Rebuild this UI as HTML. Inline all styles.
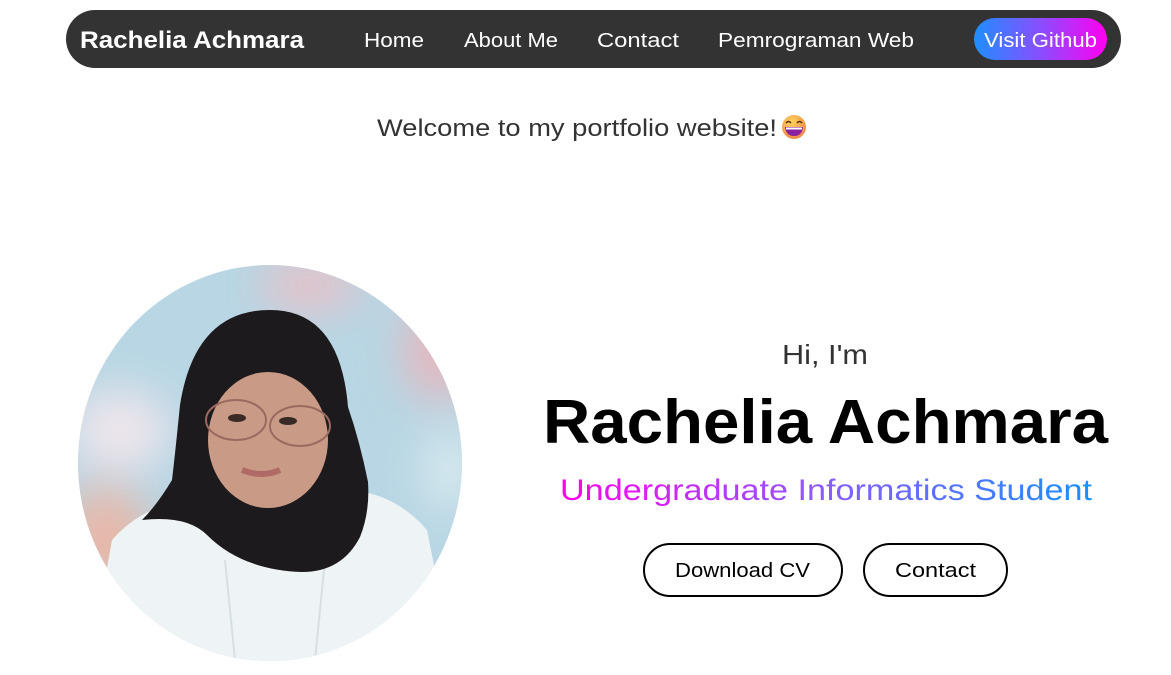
<!DOCTYPE html>
<html><head><meta charset="utf-8"><style>
html,body{margin:0;padding:0;background:#fff;width:1171px;height:675px;overflow:hidden}
svg{display:block}
text{font-family:"Liberation Sans",sans-serif}
</style></head><body>
<svg width="1171" height="675" viewBox="0 0 1171 675" xmlns="http://www.w3.org/2000/svg">
<defs>
<linearGradient id="btn" x1="0" x2="1" y1="0" y2="0"><stop offset="0" stop-color="#1e8fff"/><stop offset="0.5" stop-color="#8a4dff"/><stop offset="1" stop-color="#ff00f0"/></linearGradient>
<linearGradient id="sub" x1="560" x2="1092" y1="0" y2="0" gradientUnits="userSpaceOnUse"><stop offset="0" stop-color="#ff00ee"/><stop offset="0.5" stop-color="#8a5cff"/><stop offset="1" stop-color="#1a8fff"/></linearGradient>
<clipPath id="cp"><ellipse cx="270" cy="463" rx="192" ry="198"/></clipPath>
<filter id="bl" x="-50%" y="-50%" width="200%" height="200%"><feGaussianBlur stdDeviation="22"/></filter>
<radialGradient id="emo" cx="0.4" cy="0.3" r="0.7"><stop offset="0" stop-color="#ffd45a"/><stop offset="1" stop-color="#f08a4a"/></radialGradient>
</defs>

<rect x="66" y="10" width="1055" height="58" rx="29" fill="#333"/>
<text x="80" y="48" fill="#fff" font-size="24" font-weight="bold" textLength="224" lengthAdjust="spacingAndGlyphs">Rachelia Achmara</text>
<text x="364" y="47" fill="#fff" font-size="20" textLength="60" lengthAdjust="spacingAndGlyphs">Home</text>
<text x="464" y="47" fill="#fff" font-size="20" textLength="94" lengthAdjust="spacingAndGlyphs">About Me</text>
<text x="597" y="47" fill="#fff" font-size="20" textLength="82" lengthAdjust="spacingAndGlyphs">Contact</text>
<text x="718" y="47" fill="#fff" font-size="20" textLength="196" lengthAdjust="spacingAndGlyphs">Pemrograman Web</text>
<rect x="974" y="18" width="133" height="42" rx="21" fill="url(#btn)"/>
<text x="984" y="47" fill="#fff" font-size="20" textLength="113" lengthAdjust="spacingAndGlyphs">Visit Github</text>

<text x="377" y="136" fill="#333" font-size="24" textLength="400" lengthAdjust="spacingAndGlyphs">Welcome to my portfolio website!</text>
<circle cx="794" cy="127" r="12" fill="url(#emo)"/>
<path d="M786 123 q2.5-3 5 0 M797 123 q2.5-3 5 0" stroke="#5a2a10" stroke-width="1.6" fill="none"/>
<path d="M785 127 h18 q-1 9 -9 9 q-8 0 -9 -9z" fill="#8a1fa0"/>
<path d="M786 127.5 h16 v2 h-16z" fill="#fff"/>

<g clip-path="url(#cp)">
<rect x="70" y="260" width="400" height="410" fill="#b8d6e4"/>
<g filter="url(#bl)">
<ellipse cx="310" cy="285" rx="50" ry="25" fill="#eabfc6"/>
<ellipse cx="120" cy="430" rx="50" ry="40" fill="#f0e6ec"/>
<ellipse cx="105" cy="540" rx="45" ry="55" fill="#e8b8a8"/>
<ellipse cx="440" cy="350" rx="35" ry="50" fill="#e8b6bc"/>
<ellipse cx="450" cy="470" rx="25" ry="40" fill="#dcecf0"/>
</g>
<path d="M112 540 q30-35 80-40 l160 -10 q45 5 75 40 l30 150 h-370z" fill="#eef3f5"/>
<path d="M225 560 l10 100 M325 560 l-10 100" stroke="#d6dfe2" stroke-width="2" fill="none"/>
<path d="M270 310 q-75 0 -90 95 q-5 50 -8 75 q-15 25 -30 40 q45 -5 65 15 q35 35 95 37 q40 0 58 -35 q10 -25 8 -55 q-8 -40 -20 -75 q-8 -97 -78 -97z" fill="#1c1a1d"/>
<ellipse cx="268" cy="440" rx="60" ry="68" fill="#c99a85"/>
<path d="M206 420 q5 -50 60 -60 q55 0 66 55 l4 -30 q-15 -55 -70 -55 q-60 5 -66 60z" fill="#1c1a1d"/>
<ellipse cx="236" cy="420" rx="30" ry="20" fill="none" stroke="#9a6a60" stroke-width="2"/>
<ellipse cx="300" cy="426" rx="30" ry="20" fill="none" stroke="#9a6a60" stroke-width="2"/>
<ellipse cx="237" cy="418" rx="9" ry="4" fill="#3a2a25"/>
<ellipse cx="288" cy="421" rx="9" ry="4" fill="#3a2a25"/>
<path d="M242 470 q20 8 38 0" stroke="#b06a65" stroke-width="6" fill="none"/>
</g>

<text x="782" y="364" fill="#333" font-size="28" textLength="86" lengthAdjust="spacingAndGlyphs">Hi, I'm</text>
<text x="543" y="443" fill="#000" font-size="62" font-weight="bold" textLength="565" lengthAdjust="spacingAndGlyphs">Rachelia Achmara</text>
<text x="560" y="500" fill="url(#sub)" font-size="30" textLength="532" lengthAdjust="spacingAndGlyphs">Undergraduate Informatics Student</text>

<rect x="644" y="544" width="198" height="52" rx="26" fill="#fff" stroke="#000" stroke-width="2"/>
<text x="675" y="577" fill="#000" font-size="20" textLength="135" lengthAdjust="spacingAndGlyphs">Download CV</text>
<rect x="864" y="544" width="143" height="52" rx="26" fill="#fff" stroke="#000" stroke-width="2"/>
<text x="895" y="577" fill="#000" font-size="20" textLength="81" lengthAdjust="spacingAndGlyphs">Contact</text>
</svg>
</body></html>
